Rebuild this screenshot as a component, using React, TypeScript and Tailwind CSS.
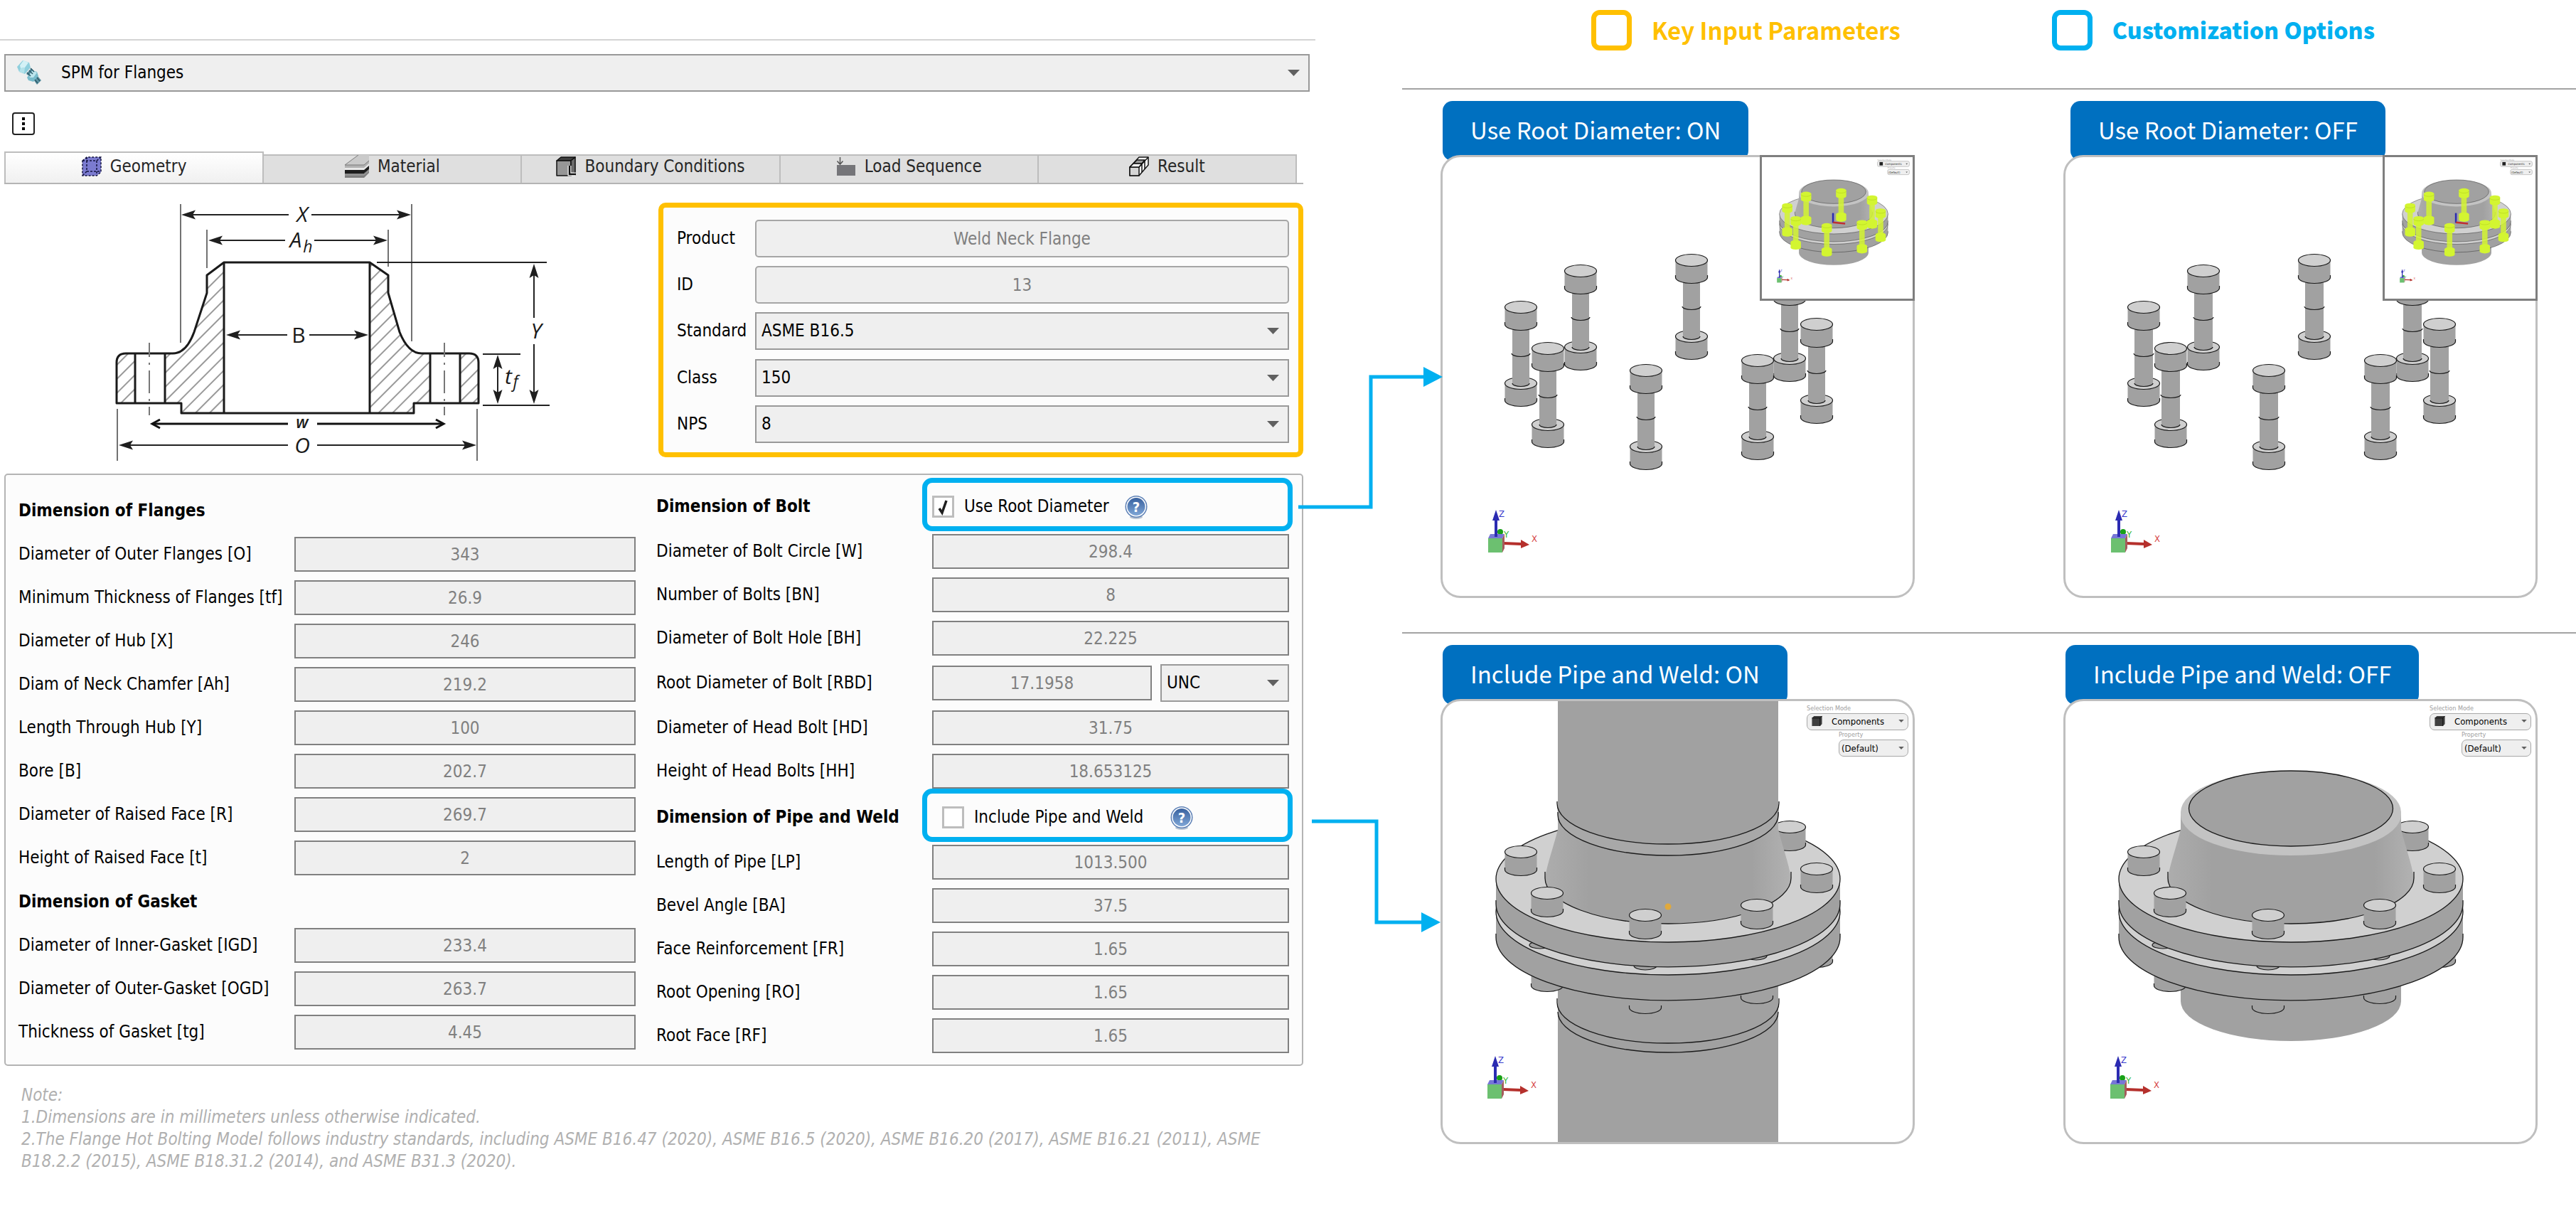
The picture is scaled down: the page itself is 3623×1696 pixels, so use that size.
import React from "react";

const UI_FONT = "font-['DejaVu_Sans_Condensed','DejaVu_Sans',sans-serif]";
const CJK_FONT = "font-['Noto_Sans_CJK_SC','Noto_Sans',sans-serif]";

/* ---------- shared controls ---------- */

function Caret({ className }: { className: string }) {
  return (
    <svg viewBox="0 0 17 9" className={className} aria-hidden="true">
      <path d="M0 0H17L8.5 9Z" fill="#606060" />
    </svg>
  );
}

function SelectBox({ id, value, label, textPad = "pl-[7px]" }: { id: string; value: string; label?: string; textPad?: string }) {
  return (
    <div className="relative w-full">
      <select
        id={id}
        aria-label={label}
        className={`h-[53px] w-full appearance-none rounded-none border-2 border-[#999999] bg-[#efefef] ${textPad} pr-10 text-[24px] text-black`}
      >
        <option>{value}</option>
      </select>
      <Caret className="pointer-events-none absolute top-[22px] right-[14px] h-[9px] w-[17px]" />
    </div>
  );
}

function ValueBox({ id, value }: { id: string; value: string }) {
  return (
    <input
      id={id}
      value={value}
      disabled
      className="h-[49px] w-full min-w-0 rounded-none border-2 border-[#808080] bg-[#efefef] text-center text-[24px] text-[#808080]"
    />
  );
}

function HelpButton({ label }: { label: string }) {
  return (
    <button type="button" aria-label={label} className="h-9 w-9">
      <svg viewBox="0 0 36 36" className="h-9 w-9">
        <defs>
          <linearGradient id="helpFill" x1="0" y1="0" x2="0" y2="1">
            <stop offset="0" stopColor="#38619f" />
            <stop offset="1" stopColor="#7fa6d6" />
          </linearGradient>
        </defs>
        <ellipse cx="18" cy="32" rx="9" ry="3" fill="#b9c3d1" />
        <circle cx="18" cy="17.500" r="15.500" fill="#5b7fb5" />
        <circle cx="18" cy="17.500" r="14" fill="#ffffff" />
        <circle cx="18" cy="17.500" r="12.500" fill="url(#helpFill)" />
        <text x="18" y="25" textAnchor="middle" fontSize="20" fontWeight="700" fill="#ffffff" fontFamily="'DejaVu Sans Condensed', sans-serif">
          ?
        </text>
      </svg>
    </button>
  );
}

/* ---------- icons ---------- */

function BoltsIcon({ className }: { className: string }) {
  return (
    <svg viewBox="0 0 36 36" className={className} aria-hidden="true">
      <path d="M14 20L21 12L27 18L21 25Z" fill="#4f8798" />
      <path d="M24 28L30 23L35 29L29 35Z" fill="#5e95a6" />
      <path d="M1 10L9 1L18 4L20 11L12 20L4 17Z" fill="#8fcfdd" />
      <path d="M5 8L10 1L17 4L12 11L6 12Z" fill="#d3f1f6" />
      <path d="M6 12L12 11L11 19L4 17Z" fill="#b4e2ea" />
      <path d="M15 25L22 15L29 17L31 23L24 31L17 29Z" fill="#79bccc" />
      <path d="M18 22L23 15L29 18L24 25L19 25Z" fill="#bde6ee" />
      <path d="M15 18L20 23M18 15L23 20M20 12L25 17M26 28L30 33M29 25L33 30" stroke="#2f5c6b" strokeWidth="1.500" />
    </svg>
  );
}

function GeometryIcon() {
  return (
    <svg viewBox="0 0 28 28" className="h-7 w-7" aria-hidden="true">
      <path d="M1 6L7 1H27V22L21 27H1Z" fill="#7b7bd0" />
      <path d="M1 6L7 1H27V22L21 27H1ZM1 6H21V27M21 6L27 1M7 1V21H27M7 21L1 27" fill="none" stroke="#15153f" strokeWidth="1.500" strokeDasharray="3 2" />
    </svg>
  );
}

function MaterialIcon() {
  return (
    <svg viewBox="0 0 34 32" className="h-8 w-[34px]" aria-hidden="true">
      <path d="M0 14L19 0H34V7L27 14Z" fill="#cacaca" />
      <path d="M0 14H27L34 7V12L27 20H0Z" fill="#b2b2b2" />
      <path d="M0 14L19 0M0 14H27L34 8" fill="none" stroke="#7b7b7b" />
      <path d="M0 18H27L34 12V16L27 22H0Z" fill="#e8e8e8" />
      <path d="M0 21H27L34 15V20L27 26H0Z" fill="#1c1c1c" />
      <path d="M0 26H27L34 20V25L27 32H0Z" fill="#7e7e7e" />
      <path d="M0 28H27L34 22" fill="none" stroke="#a8a8a8" />
    </svg>
  );
}

function BoundaryIcon() {
  return (
    <svg viewBox="0 0 28 28" className="h-7 w-7" aria-hidden="true">
      <g stroke="#111111" strokeWidth="1.500" strokeLinejoin="round">
        <path d="M1 6L7 1H27L21 6Z" fill="#3f3f3f" />
        <path d="M1 6H21V27H1Z" fill="#969696" />
        <path d="M21 6L27 1V22L21 27Z" fill="#6b6b6b" />
      </g>
      <path d="M19 13V25H27" fill="none" stroke="#ffffff" strokeWidth="5" />
      <path d="M19 13V25H28" fill="none" stroke="#111111" strokeWidth="2.500" />
    </svg>
  );
}

function LoadIcon() {
  return (
    <svg viewBox="0 0 28 28" className="h-7 w-7" aria-hidden="true">
      <path d="M1 12H27V27H1Z" fill="#757579" />
      <path d="M5.500 1V11M1.500 6.500L5.500 11L9.500 6.500" fill="none" stroke="#555555" strokeWidth="1.500" />
    </svg>
  );
}

function ResultIcon() {
  return (
    <svg viewBox="0 0 28 28" className="h-7 w-7" aria-hidden="true">
      <g stroke="#111111" strokeWidth="1.500" strokeLinejoin="round">
        <path d="M1 15L14 1H27V12L14 27H1Z" fill="#ffffff" />
        <path d="M6 10L11 5H22L18 10Z" fill="#9a9a9a" />
        <path d="M1 15H14V27H1Z" fill="#d5d5d5" />
        <path d="M14 15L27 1M18 10V22M22 6V18" fill="none" />
        <path d="M1 15L6 10H18L14 15Z" fill="#f3f3f3" />
      </g>
    </svg>
  );
}

/* ---------- flange section drawing ---------- */

function Arrow({ x, y, dir, open = false }: { x: number; y: number; dir: "l" | "r" | "u" | "d"; open?: boolean }) {
  const angle = { r: 0, d: 90, l: 180, u: 270 }[dir];
  return (
    <path
      d={open ? "M-11 -6L0 0L-11 6" : "M0 0L-20 -6.500L-16 0L-20 6.500Z"}
      transform={`translate(${x} ${y}) rotate(${angle})`}
      fill={open ? "none" : "#1f1f1f"}
      stroke={open ? "#111111" : "none"}
      strokeWidth="3"
    />
  );
}

function FlangeSection() {
  return (
    <svg viewBox="0 5 640 358" className="ml-[144px] h-[358px] w-[640px] max-w-full overflow-visible" role="img" aria-label="Weld neck flange section">
      <defs>
        <pattern id="hatch" width="14" height="14" patternUnits="userSpaceOnUse" patternTransform="rotate(45)">
          <path d="M7 0V14" stroke="#555555" strokeWidth="1.200" />
        </pattern>
      </defs>
      <g fill="url(#hatch)">
        <path d="M165 89L141 107V132L123 187Q112 217 93 217H82V287H105V301H165Z" />
        <path d="M370 89L396 107V132L412 187Q424 217 443 217H455V287H432V301H370Z" />
        <path d="M40 217H27Q14 217 14 230V287H40Z" />
        <path d="M497 217H510Q523 217 523 230V287H497Z" />
      </g>
      <path
        d="M165 89L141 107V132L123 187Q112 217 93 217H27Q14 217 14 230V287H105V301H432V287H523V230Q523 217 510 217H443Q424 217 412 187L396 132V107L370 89Z"
        fill="none"
        stroke="#1a1a1a"
        strokeWidth="3"
        strokeLinejoin="round"
      />
      <path d="M165 89V301M370 89V301M40 217V287M82 217V287M455 217V287M497 217V287" stroke="#1a1a1a" strokeWidth="3" />
      <path d="M60 202V304M475 202V304" stroke="#777777" strokeWidth="2" strokeDasharray="20 8 3 8 32 8 3 8" />
      <g stroke="#444444" strokeWidth="1.500" fill="none">
        <path d="M104 7V202M429 7V200M141 43V97M396 43V95M15 295V368M521 295V368" />
      </g>
      <g stroke="#222222" strokeWidth="2" fill="none">
        <path d="M380 89H619M529 218H582M529 290H623" />
        <path d="M112 22H256M288 22H421M149 58H251M292 58H388M173 191H254M285 191H362M22 346H255M296 346H514" />
        <path d="M601 97V167M601 204V282M550 225V281" />
      </g>
      <path d="M66 316H255M296 316H472" stroke="#111111" strokeWidth="3" />
      <Arrow x={105} y={22} dir="l" />
      <Arrow x={428} y={22} dir="r" />
      <Arrow x={143} y={58} dir="l" />
      <Arrow x={395} y={58} dir="r" />
      <Arrow x={168} y={191} dir="l" />
      <Arrow x={368} y={191} dir="r" />
      <Arrow x={601} y={91} dir="u" />
      <Arrow x={601} y={288} dir="d" />
      <Arrow x={550} y={219} dir="u" />
      <Arrow x={550} y={288} dir="d" />
      <Arrow x={64} y={316} dir="l" open />
      <Arrow x={474} y={316} dir="r" open />
      <Arrow x={17} y={346} dir="l" />
      <Arrow x={520} y={346} dir="r" />
      <g fontFamily="'Open Sans', sans-serif" fontStyle="italic" fontSize="30" fill="#1a1a1a" textAnchor="middle">
        <text x="275" y="32">X</text>
        <text x="266" y="68">A</text>
        <text x="283" y="75" fontSize="23">h</text>
        <text x="270" y="202" fontStyle="normal">B</text>
        <text x="604" y="196">Y</text>
        <text x="565" y="260">t</text>
        <text x="575" y="265" fontSize="23">f</text>
        <text x="275" y="322" fontWeight="600" fontSize="23">w</text>
        <text x="275" y="357">O</text>
      </g>
    </svg>
  );
}

/* ---------- 3D scenes ---------- */

type Pt = [number, number];
const BOLTS: Pt[] = [[350, 145], [194, 160], [488, 176], [110, 211], [526, 235], [148, 269], [443, 286], [286, 300]];
const TOP_HEADS: Pt[] = [[488, 177], [110, 212], [526, 236], [147, 270], [442, 287], [285, 301]];

function Disc({ x, y, h }: { x: number; y: number; h: number }) {
  return (
    <g>
      <path d={`M${x - 22.5} ${y}V${y + h}A22.5 8.5 0 0 0 ${x + 22.5} ${y + h}V${y}Z`} fill="#a1a1a1" />
      <path d={`M${x - 22.5} ${y + h - 3}V${y + h}A22.5 8.5 0 0 0 ${x + 22.5} ${y + h}V${y + h - 3}`} fill="none" stroke="#1a1a1a" strokeWidth="1.2" />
      <ellipse cx={x} cy={y} rx="22.5" ry="8.500" fill="#cfcfcf" stroke="#1a1a1a" strokeWidth="1.200" />
    </g>
  );
}

function Bolt({ x, y, r }: { x: number; y: number; r: number }) {
  return (
    <g>
      <Disc x={x} y={y + 107} h={24} />
      <path d={`M${x - r} ${y + 28}V${y + 107}A${r} 4.5 0 0 0 ${x + r} ${y + 107}V${y + 28}Z`} fill="#a1a1a1" />
      <path d={`M${x - r} ${y + 107}A${r} 4.5 0 0 0 ${x + r} ${y + 107}M${x - r - 1} ${y + 65}A${r + 1} 4.5 0 0 0 ${x + r + 1} ${y + 65}`} fill="none" stroke="#1a1a1a" strokeWidth="1.2" />
      <Disc x={x} y={y} h={24} />
    </g>
  );
}

function YellowBolt({ x, y }: { x: number; y: number }) {
  return (
    <g fill="#d3f531">
      <path d={`M${x - 12} ${y + 28}H${x + 12}V${y + 110}H${x - 12}Z`} opacity="0.85" />
      <path d={`M${x - 23} ${y}A23 9 0 0 1 ${x + 23} ${y}V${y + 26}A23 9 0 0 1 ${x - 23} ${y + 26}Z`} />
      <path d={`M${x - 23} ${y + 107}A23 9 0 0 1 ${x + 23} ${y + 107}V${y + 131}A23 9 0 0 1 ${x - 23} ${y + 131}Z`} />
      <path d={`M${x - 22} ${y + 4}A22 8 0 0 0 ${x + 22} ${y + 4}`} fill="none" stroke="#b4d41c" strokeWidth="2" />
    </g>
  );
}

function Triad() {
  return (
    <g>
      <circle cx="81" cy="527" r="4" fill="#18a018" />
      <path d="M86 541L110 542V538L122 545L110 550V546L86 545Z" fill="#b5302c" />
      <path d="M64 536L67 530H87L84 536Z" fill="#7777d6" />
      <path d="M84 536L87 530V550L84 556Z" fill="#a35c5c" />
      <path d="M64 536H84V556H64Z" fill="#6cc070" />
      <path d="M73 534V511H70L75 496L80 511H77V534Z" fill="#2b2bb2" />
      <g fontFamily="'DejaVu Sans Condensed', sans-serif" fontSize="13">
        <text x="79" y="506" fill="#3a3acb">Z</text>
        <text x="86" y="535" fill="#2fb52f">Y</text>
        <text x="125" y="541" fill="#d64545">X</text>
      </g>
    </g>
  );
}

function FlangeModel({ pipe = false, heads = true }: { pipe?: boolean; heads?: boolean }) {
  const line = { fill: "none", stroke: "#1a1a1a", strokeWidth: 1.3 };
  return (
    <g>
      <defs>
        <linearGradient id="coneShade" x1="0" x2="1" y1="0" y2="0">
          <stop offset="0" stopColor="#adadad" />
          <stop offset="0.18" stopColor="#a1a1a1" />
          <stop offset="0.84" stopColor="#a1a1a1" />
          <stop offset="1" stopColor="#b2b2b2" />
        </linearGradient>
      </defs>
      {pipe ? (
        <g>
          <path d="M162 340H472V640H162Z" fill="#a1a1a1" />
          <path d="M161 418V424A156 57 0 0 0 473 424V418M162 437A155 57 0 0 0 472 437" {...line} />
        </g>
      ) : (
        <path d="M162 340V422A155 56 0 0 0 472 422V340Z" fill="#a1a1a1" />
      )}
      {heads && TOP_HEADS.slice(2).map(([x, y]) => <Disc key={x} x={x} y={y + 106} h={24} />)}
      <path d="M75 296V332A242 89 0 0 0 559 332V296Z" fill="#a1a1a1" />
      <path d="M75 327V332A242 89 0 0 0 559 332V327" {...line} />
      <ellipse cx="317" cy="296" rx="242" ry="89" fill="#d0d0d0" stroke="#1a1a1a" strokeWidth="1.300" />
      {heads && (
        <g fill="#a1a1a1" stroke="#1a1a1a" strokeWidth="1.200">
          <ellipse cx="137" cy="343" rx="15" ry="5" />
          <ellipse cx="285" cy="372" rx="16" ry="6" />
          <ellipse cx="441" cy="358" rx="15" ry="6" />
        </g>
      )}
      <path d="M75 250V285A242 89 0 0 0 559 285V250Z" fill="#a1a1a1" />
      <path d="M75 280V285A242 89 0 0 0 559 285V280" {...line} />
      <ellipse cx="317" cy="250" rx="242" ry="89" fill="#d0d0d0" stroke="#1a1a1a" strokeWidth="1.300" />
      {heads && <Disc x={488} y={177} h={25} />}
      <path d="M162 160V180C157 202 147 228 144 249A173 64 0 0 0 490 249C487 228 477 202 472 180V160Z" fill="url(#coneShade)" />
      <path d="M144 240V249A173 64 0 0 0 490 249V240" {...line} />
      {pipe ? (
        <g>
          <path d="M162 0H472V160A155 57 0 0 1 162 160Z" fill="#a1a1a1" />
          <path d="M161 144A156 57 0 0 0 473 144V160A155 57 0 0 1 162 160Z" fill="#a8a8a8" />
          <path d="M161 141V144A156 57 0 0 0 473 144V141M162 156V160A155 57 0 0 0 472 160V156" {...line} />
          <circle cx="317" cy="289" r="4.500" fill="#e0a93c" />
        </g>
      ) : (
        <g>
          <path d="M162 156A155 58 0 0 1 472 156V160A155 57 0 0 1 162 160Z" fill="#c3c3c3" />
          <ellipse cx="317" cy="151" rx="143.500" ry="53" fill="#a1a1a1" stroke="#1a1a1a" strokeWidth="1.300" />
        </g>
      )}
      {heads && TOP_HEADS.slice(1).map(([x, y]) => <Disc key={x} x={x} y={y} h={25} />)}
    </g>
  );
}

function CubeIcon({ className }: { className: string }) {
  return (
    <svg viewBox="0 0 17 17" className={className} aria-hidden="true">
      <path d="M1 4L4 1H16V13L13 16H1Z" fill="#3f3f3f" />
      <path d="M1 4H13V16M13 4L16 1" fill="none" stroke="#0e0e0e" />
    </svg>
  );
}

/* Small picture-in-picture of the whole flange with its bolts picked out. */
function Inset() {
  return (
    <svg viewBox="-3 -3 672 632" className="absolute -top-[3px] -right-[3px] h-auto w-[33%] border-[3px] border-[#7f7f7f] bg-white" role="img" aria-label="Selected bolts on the flange">
      <FlangeModel heads={false} />
      <path d="M314 246V290" fill="none" stroke="#2b2bb2" strokeWidth="8" />
      <path d="M314 288L368 293" stroke="#c03030" strokeWidth="8" />
      {BOLTS.map(([x, y]) => (
        <YellowBolt key={x} x={x} y={y} />
      ))}
      <Triad />
      <g fill="#efefef" stroke="#aaaaaa" strokeWidth="2">
        <rect x="512" y="15" width="142" height="24" rx="7" />
        <rect x="557" y="52" width="97" height="23" rx="7" />
      </g>
      <path d="M521 19H536V34H521Z" fill="#222222" />
      <path d="M638 25H647L642 30ZM638 62H647L642 67Z" fill="#555555" />
      <g fontFamily="'DejaVu Sans Condensed', sans-serif" fill="#222222">
        <text x="546" y="32" fontSize="13">Components</text>
        <text x="561" y="69" fontSize="13">(Default)</text>
        <text x="512" y="12" fontSize="9" fill="#999999">Selection Mode</text>
        <text x="557" y="49" fontSize="9" fill="#999999">Property</text>
      </g>
    </svg>
  );
}

function ViewerControls({ id }: { id: string }) {
  return (
    <div className={`absolute top-1 right-[6px] flex flex-col items-end ${UI_FONT}`}>
      <div className="w-[143px]">
        <label htmlFor={`${id}-mode`} className="block text-[9px] leading-[12px] text-[#a0a0a0]">
          Selection Mode
        </label>
        <div className="relative">
          <select id={`${id}-mode`} className="h-6 w-full appearance-none rounded-[7px] border border-[#a8a8a8] bg-[#efefef] pl-[34px] text-[13px] leading-none text-black">
            <option>Components</option>
          </select>
          <CubeIcon className="pointer-events-none absolute top-1 left-[6px] h-4 w-[17px]" />
          <Caret className="pointer-events-none absolute top-[10px] right-[6px] h-1 w-2" />
        </div>
      </div>
      <div className="w-[98px]">
        <label htmlFor={`${id}-property`} className="block text-[9px] leading-[13px] text-[#a0a0a0]">
          Property
        </label>
        <div className="relative">
          <select id={`${id}-property`} className="h-6 w-full appearance-none rounded-[7px] border border-[#a8a8a8] bg-[#efefef] pl-[3px] text-[13px] leading-none text-black">
            <option>(Default)</option>
          </select>
          <Caret className="pointer-events-none absolute top-[10px] right-[6px] h-1 w-2" />
        </div>
      </div>
    </div>
  );
}

function ViewCard({ title, tagInset, children }: { title: string; tagInset: string; children: React.ReactNode }) {
  return (
    <article>
      <h2 className={`-mb-2 flex h-[84px] w-fit items-center rounded-[14px] bg-[#0070c0] px-[39px] pb-1 text-[33px] leading-none whitespace-nowrap text-white ${tagInset} ${CJK_FONT}`}>
        {title}
      </h2>
      <div className="relative rounded-[28px] border-[3px] border-[#bfbfbf] bg-white">{children}</div>
    </article>
  );
}

function BoltScene({ label, r }: { label: string; r: number }) {
  return (
    <>
      <svg viewBox="0 0 661 617" className="block h-auto w-full" role="img" aria-label={label}>
        {BOLTS.map(([x, y]) => (
          <Bolt key={x} x={x} y={y} r={r} />
        ))}
        <Triad />
      </svg>
      <Inset />
    </>
  );
}

function FlangeScene({ id, label, pipe }: { id: string; label: string; pipe?: boolean }) {
  return (
    <>
      <svg viewBox="0 0 661 620" className="block h-auto w-full" role="img" aria-label={label}>
        <FlangeModel pipe={pipe} />
        <g transform="translate(-1 3)">
          <Triad />
        </g>
      </svg>
      <ViewerControls id={id} />
    </>
  );
}

/* ---------- form ---------- */

const TABS = [
  { name: "Geometry", icon: <GeometryIcon /> },
  { name: "Material", icon: <MaterialIcon /> },
  { name: "Boundary Conditions", icon: <BoundaryIcon /> },
  { name: "Load Sequence", icon: <LoadIcon /> },
  { name: "Result", icon: <ResultIcon /> },
];

const FLANGE_ROWS = [
  ["Diameter of Outer Flanges [O]", "343"],
  ["Minimum Thickness of Flanges [tf]", "26.9"],
  ["Diameter of Hub [X]", "246"],
  ["Diam of Neck Chamfer [Ah]", "219.2"],
  ["Length Through Hub [Y]", "100"],
  ["Bore [B]", "202.7"],
  ["Diameter of Raised Face [R]", "269.7"],
  ["Height of Raised Face [t]", "2"],
];
const GASKET_ROWS = [
  ["Diameter of Inner-Gasket [IGD]", "233.4"],
  ["Diameter of Outer-Gasket [OGD]", "263.7"],
  ["Thickness of Gasket [tg]", "4.45"],
];
const BOLT_ROWS = [
  ["Diameter of Bolt Circle [W]", "298.4"],
  ["Number of Bolts [BN]", "8"],
  ["Diameter of Bolt Hole [BH]", "22.225"],
  ["Root Diameter of Bolt [RBD]", "17.1958"],
  ["Diameter of Head Bolt [HD]", "31.75"],
  ["Height of Head Bolts [HH]", "18.653125"],
];
const PIPE_ROWS = [
  ["Length of Pipe [LP]", "1013.500"],
  ["Bevel Angle [BA]", "37.5"],
  ["Face Reinforcement [FR]", "1.65"],
  ["Root Opening [RO]", "1.65"],
  ["Root Face [RF]", "1.65"],
];

function Rows({ rows, prefix, cols }: { rows: string[][]; prefix: string; cols: string }) {
  return (
    <div className="flex flex-col gap-3">
      {rows.map(([label, value], i) => {
        const id = `${prefix}-${i}`;
        return (
          <div key={id} className={`grid items-center ${cols}`}>
            <label htmlFor={id} className="whitespace-nowrap">
              {label}
            </label>
            {label.includes("[RBD]") ? (
              <div className="grid grid-cols-[309fr_181fr] items-center gap-3">
                <ValueBox id={id} value={value} />
                <SelectBox id="thread" label="Thread series" value="UNC" />
              </div>
            ) : (
              <ValueBox id={id} value={value} />
            )}
          </div>
        );
      })}
    </div>
  );
}

function OptionRow({ heading, id, label, checked, pad, gap }: { heading: string; id: string; label: string; checked?: boolean; pad: string; gap: string }) {
  return (
    <div className="grid grid-cols-[388fr_502fr]">
      <h3 className="flex items-center pt-[6px] font-bold whitespace-nowrap">{heading}</h3>
      <div className={`-mr-[5px] -ml-[14px] flex h-[75px] items-center rounded-[14px] border-[7px] border-[#00b0f0] pt-[6px] ${pad} ${gap}`}>
        <div className="flex items-center gap-[14px]">
          <div className="relative h-[31px] w-[31px]">
            <input type="checkbox" id={id} defaultChecked={checked} className="peer block h-[31px] w-[31px] appearance-none border-[3px] border-[#bdbdbd] bg-white" />
            <svg viewBox="0 0 31 31" className="pointer-events-none absolute top-0 left-0 hidden h-[31px] w-[31px] peer-checked:block" aria-hidden="true">
              <path d="M10 18L14 24L20 7" fill="none" stroke="#1f1f1f" strokeWidth="3.500" />
            </svg>
          </div>
          <label htmlFor={id} className="whitespace-nowrap">
            {label}
          </label>
        </div>
        <HelpButton label={`Help: ${label}`} />
      </div>
    </div>
  );
}

function PlainField({ id, label, value }: { id: string; label: string; value: string }) {
  return (
    <>
      <label htmlFor={id}>{label}</label>
      <input id={id} value={value} disabled className="h-[53px] w-full min-w-0 rounded-[5px] border-2 border-[#a6a6a6] bg-[#efefef] text-center text-[24px] text-[#808080]" />
    </>
  );
}

function FormSide() {
  return (
    <section className={`text-[24px] leading-[31px] text-black ${UI_FONT}`}>
      <div className="h-[57px] border-b-2 border-[#d4d4d4]" />
      <div className="pt-[19px] pr-2 pl-[6px]">
        <div className="relative">
          <SelectBox id="model" label="Model" value="SPM for Flanges" textPad="pl-[78px]" />
          <BoltsIcon className="pointer-events-none absolute top-2 left-[17px] h-9 w-9" />
        </div>
        <button type="button" aria-label="More options" className="mt-[29px] ml-[11px] flex h-8 w-8 flex-col items-center justify-center gap-[3px] rounded-[4px] border-2 border-[#222222] bg-white">
          <span className="h-1 w-1 bg-black" />
          <span className="h-1 w-1 bg-black" />
          <span className="h-1 w-1 bg-black" />
        </button>
        <div className="pr-[9px]">
          <div role="tablist" className="mt-[23px] flex h-[46px] items-end border-b-2 border-[#b4b4b4] pr-[9px]">
            {TABS.map((tab, i) => (
              <button
                key={tab.name}
                type="button"
                role="tab"
                aria-selected={i === 0}
                className={
                  i === 0
                    ? "flex h-11 flex-1 items-center justify-center gap-3 border-2 border-b-0 border-[#bdbdbd] bg-linear-to-b from-white to-[#f0f0f0] pb-1 text-[#262626]"
                    : "flex h-10 flex-1 items-center justify-center gap-3 border-t-2 border-r-2 border-[#bdbdbd] bg-[#dfdfdf] pb-2 text-[#262626]"
                }
              >
                {tab.icon}
                <span>{tab.name}</span>
              </button>
            ))}
          </div>

          <div className="mt-[26px] grid grid-cols-[920fr_907fr]">
            <FlangeSection />
            <div className="grid grid-cols-[110px_1fr] items-center gap-y-3 rounded-[10px] border-[7px] border-[#ffc000] bg-[#fcfcfc] pt-[17px] pr-[13px] pb-[13px] pl-[19px]">
              <PlainField id="product" label="Product" value="Weld Neck Flange" />
              <PlainField id="pid" label="ID" value="13" />
              <label htmlFor="standard">Standard</label>
              <SelectBox id="standard" value="ASME B16.5" />
              <label htmlFor="class">Class</label>
              <SelectBox id="class" value="150" />
              <label htmlFor="nps">NPS</label>
              <SelectBox id="nps" value="8" />
            </div>
          </div>

          <div className="mt-[23px] grid grid-cols-[868fr_890fr] gap-x-[29px] rounded-[5px] border-2 border-[#b4b4b4] bg-[#fcfcfc] px-[18px] pt-1 pb-4">
            <div>
              <h3 className="flex h-[83px] items-center pt-[10px] font-bold">Dimension of Flanges</h3>
              <Rows rows={FLANGE_ROWS} prefix="flange" cols="grid-cols-[388fr_480fr]" />
              <h3 className="flex h-[74px] items-center font-bold">Dimension of Gasket</h3>
              <Rows rows={GASKET_ROWS} prefix="gasket" cols="grid-cols-[388fr_480fr]" />
            </div>
            <div className="flex flex-col gap-1">
              <OptionRow heading="Dimension of Bolt" id="use-root" label="Use Root Diameter" checked pad="pl-[7px]" gap="gap-5" />
              <Rows rows={BOLT_ROWS} prefix="bolt" cols="grid-cols-[388fr_502fr]" />
              <div className="-mt-1">
                <OptionRow heading="Dimension of Pipe and Weld" id="include-pipe" label="Include Pipe and Weld" pad="pl-[21px]" gap="gap-9" />
              </div>
              <Rows rows={PIPE_ROWS} prefix="pipe" cols="grid-cols-[388fr_502fr]" />
            </div>
          </div>
        </div>
        <div className="mt-[26px] pr-9 pl-6 text-[#b0b0b0] italic">
          <p>Note:</p>
          <p>1.Dimensions are in millimeters unless otherwise indicated.</p>
          <p>
            2.The Flange Hot Bolting Model follows industry standards, including ASME B16.47 (2020), ASME B16.5 (2020), ASME B16.20 (2017), ASME B16.21 (2011), ASME
            B18.2.2 (2015), ASME B18.31.2 (2014), and ASME B31.3 (2020).
          </p>
        </div>
      </div>
    </section>
  );
}

function Connectors() {
  return (
    <svg viewBox="0 0 204 820" className="pointer-events-none absolute top-[500px] -left-6 z-10 h-[820px] w-[204px]" aria-hidden="true">
      <g fill="none" stroke="#00b0f0" strokeWidth="5">
        <path d="M0 213H102V30H178" />
        <path d="M19 655H110V797H176" />
      </g>
      <path d="M176 16L203 30L176 44ZM173 783L200 797L173 811Z" fill="#00b0f0" />
    </svg>
  );
}

export default function App() {
  return (
    <main className="grid min-h-screen grid-cols-[1850fr_1773fr] items-start bg-white">
      <FormSide />
      <aside className="relative pl-[122px]">
        <Connectors />
        <div className={`flex h-[124px] items-start gap-[213px] pt-[14px] pl-[266px] leading-[57px] whitespace-nowrap ${CJK_FONT}`}>
          <div className="flex gap-7 text-[33px] leading-[57px] font-bold text-[#ffc000]">
            <span className="h-[57px] w-[57px] rounded-[12px] border-[7px] border-[#ffc000]" />
            <span>Key Input Parameters</span>
          </div>
          <div className="flex gap-7 text-[32px] leading-[54px] font-black text-[#00b0f0]">
            <span className="h-[57px] w-[57px] rounded-[12px] border-[7px] border-[#00b0f0]" />
            <span>Customization Options</span>
          </div>
        </div>
        <section className="grid grid-cols-2 gap-[209px] border-t-2 border-[#a3a3a3] px-[54px] pt-4 pb-12">
          <ViewCard title="Use Root Diameter: ON" tagInset="ml-[3px]">
            <BoltScene label="Bolts modelled with the root diameter" r={12} />
          </ViewCard>
          <ViewCard title="Use Root Diameter: OFF" tagInset="ml-[10px]">
            <BoltScene label="Bolts modelled with the nominal diameter" r={13} />
          </ViewCard>
        </section>
        <section className="grid grid-cols-2 gap-[209px] border-t-2 border-[#a3a3a3] px-[54px] pt-4">
          <ViewCard title="Include Pipe and Weld: ON" tagInset="ml-[3px]">
            <FlangeScene id="pipe-on" label="Flange joined to pipe" pipe />
          </ViewCard>
          <ViewCard title="Include Pipe and Weld: OFF" tagInset="ml-[3px]">
            <FlangeScene id="pipe-off" label="Flange without pipe" />
          </ViewCard>
        </section>
      </aside>
    </main>
  );
}
